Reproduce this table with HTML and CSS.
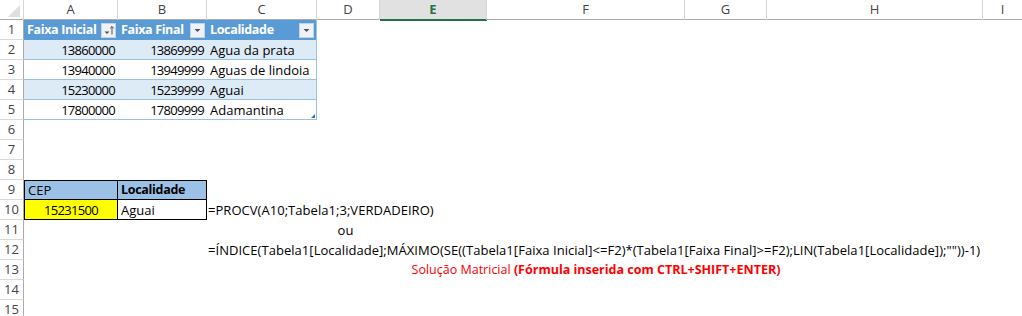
FILE: index.html
```html
<!DOCTYPE html>
<html lang="pt">
<head>
<meta charset="utf-8">
<title>Planilha</title>
<link rel="stylesheet" href="styles.css">
</head>
<body>
<div class="sheet">
  <div class="row hdr">
    <div class="corner"><span class="tri"></span></div>
    <div class="ch">A</div>
    <div class="ch">B</div>
    <div class="ch">C</div>
    <div class="ch">D</div>
    <div class="ch sel">E</div>
    <div class="ch">F</div>
    <div class="ch">G</div>
    <div class="ch">H</div>
    <div class="ch last">I</div>
  </div>

  <div class="row">
    <div class="rh">1</div>
    <div class="c th">Faixa Inicial <span class="fbtn"><svg width="13" height="12" viewBox="0 0 13 12"><path d="M2.5 7.5h5l-2.5 2.5z" fill="#505050"/><path d="M10 2.5v8M8.2 4.3l1.8-1.8 1.8 1.8" stroke="#505050" stroke-width="1" fill="none"/></svg></span></div>
    <div class="c th">Faixa Final <span class="fbtn"><svg width="13" height="12" viewBox="0 0 13 12"><path d="M3.5 5h6l-3 3z" fill="#505050"/></svg></span></div>
    <div class="c th thr">Localidade <span class="fbtn"><svg width="13" height="12" viewBox="0 0 13 12"><path d="M3.5 5h6l-3 3z" fill="#505050"/></svg></span></div>
  </div>

  <div class="row">
    <div class="rh">2</div>
    <div class="c td band num">13860000</div>
    <div class="c td band num">13869999</div>
    <div class="c td band tdr">Agua da prata</div>
  </div>
  <div class="row">
    <div class="rh">3</div>
    <div class="c td num">13940000</div>
    <div class="c td num">13949999</div>
    <div class="c td tdr">Aguas de lindoia</div>
  </div>
  <div class="row">
    <div class="rh">4</div>
    <div class="c td band num">15230000</div>
    <div class="c td band num">15239999</div>
    <div class="c td band tdr">Aguai</div>
  </div>
  <div class="row">
    <div class="rh">5</div>
    <div class="c td num">17800000</div>
    <div class="c td num">17809999</div>
    <div class="c td tdr handle">Adamantina</div>
  </div>
  <div class="row"><div class="rh">6</div></div>
  <div class="row"><div class="rh">7</div></div>
  <div class="row"><div class="rh">8</div></div>
  <div class="row">
    <div class="rh">9</div>
    <div class="c bx bx-top bx-left lblue">CEP</div>
    <div class="c bx bx-top lblue bold">Localidade</div>
  </div>
  <div class="row">
    <div class="rh">10</div>
    <div class="c bx bx-left yellow center digits">15231500</div>
    <div class="c bx">Aguai</div>
    <div class="c formula">=PROCV(A10;Tabela1;3;VERDADEIRO)</div>
  </div>
  <div class="row">
    <div class="rh">11</div>
    <div class="c ou">ou</div>
  </div>
  <div class="row">
    <div class="rh">12</div>
    <div class="c formula">=ÍNDICE(Tabela1[Localidade];MÁXIMO(SE((Tabela1[Faixa Inicial]&lt;=F2)*(Tabela1[Faixa Final]&gt;=F2);LIN(Tabela1[Localidade]);""))-1)</div>
  </div>
  <div class="row">
    <div class="rh">13</div>
    <div class="c note">Solução Matricial <b>(Fórmula inserida com CTRL+SHIFT+ENTER)</b></div>
  </div>
  <div class="row"><div class="rh">14</div></div>
  <div class="row"><div class="rh">15</div></div>
</div>
</body>
</html>
```
FILE: styles.css
```css
html, body {
  margin: 0;
  padding: 0;
  background: #fff;
}
body {
  width: 1022px;
  height: 316px;
  overflow: hidden;
  font-family: "Open Sans", "Liberation Sans", sans-serif;
}
.sheet {
  display: flex;
  flex-direction: column;
}
.row {
  display: grid;
  grid-template-columns: 24px 94px 89px 110px 63px 107px 198px 82px 216px 39px;
  grid-auto-rows: 20px;
  height: 20px;
}
.hdr {
  border-bottom: 1px solid #ababab;
  box-sizing: border-box;
}
.corner {
  position: relative;
  border-right: 1px solid #d5d5d5;
}
.corner .tri {
  position: absolute;
  right: 3px;
  bottom: 3px;
  width: 0;
  height: 0;
  border-left: 12px solid transparent;
  border-bottom: 12px solid #dfdfdf;
}
.ch {
  font-size: 13px;
  color: #444;
  text-align: center;
  line-height: 19px;
  border-right: 1px solid #d5d5d5;
  box-sizing: border-box;
}
.ch.sel {
  background: #e1e1e1;
  color: #217346;
  font-weight: 700;
  border-bottom: 2px solid #217346;
  margin-bottom: -1px;
  line-height: 18px;
}
.ch.last { border-right: none; }

.rh {
  font-size: 13px;
  color: #444;
  text-align: center;
  line-height: 19px;
  border-right: 1px solid #ababab;
  border-bottom: 1px solid #dadada;
  box-sizing: border-box;
  grid-column: 1;
}

.c {
  font-size: 13px;
  line-height: 20px;
  color: #000;
  padding: 0 3px;
  white-space: nowrap;
  box-sizing: border-box;
  height: 20px;
}
.th {
  background: #5b9bd5;
  color: #fff;
  font-weight: 700;
  font-size: 12.5px;
  letter-spacing: -0.35px;
  display: flex;
  justify-content: space-between;
  align-items: center;
  padding-right: 2px;
}
.thr { border-right: 1px solid #9bc2e6; }
.fbtn {
  width: 15px;
  height: 15px;
  box-sizing: border-box;
  background: #eef2f7;
  border: 1px solid #c3d3e6;
  display: flex;
  align-items: center;
  justify-content: center;
  flex: none;
}
.td {
  border-bottom: 1px solid #9bc2e6;
}
.tdr { border-right: 1px solid #9bc2e6; }
.band { background: #ddebf7; }
.num {
  text-align: right;
  letter-spacing: -0.7px;
}
.digits { letter-spacing: -0.7px; }
.handle { position: relative; }
.handle::after {
  content: "";
  position: absolute;
  right: 1px;
  bottom: 1px;
  width: 0;
  height: 0;
  border-left: 4px solid transparent;
  border-bottom: 4px solid #3e6fb0;
}

.bx {
  border-right: 1px solid #000;
  border-bottom: 1px solid #000;
}
.bx-top { border-top: 1px solid #000; line-height: 18px; }
.bx-left { border-left: 1px solid #000; }
.lblue { background: #9bc2e6; }
.yellow { background: #ffff00; }
.bold {
  font-weight: 700;
  font-size: 12.5px;
  letter-spacing: -0.3px;
}
.center { text-align: center; }

.formula {
  grid-column: 4 / 11;
  padding-left: 1px;
  letter-spacing: 0.04px;
}
.ou {
  grid-column: 5;
  text-align: center;
  padding-right: 9px;
}
.note {
  grid-column: 5 / 11;
  text-align: center;
  padding-right: 150px;
  color: #ff0000;
  font-size: 12.5px;
}
.note b { font-weight: 700; }
```
